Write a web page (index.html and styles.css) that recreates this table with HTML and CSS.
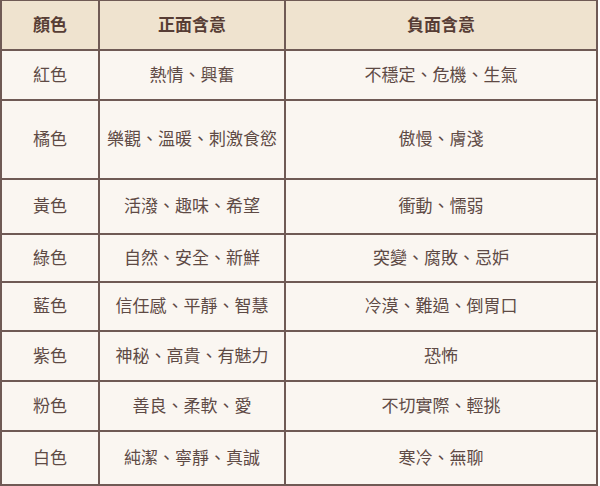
FILE: index.html
```html
<!DOCTYPE html>
<html lang="zh-Hant">
<head>
<meta charset="utf-8">
<link rel="stylesheet" href="styles.css">
</head>
<body>
<table class="meaning">
  <colgroup>
    <col class="c1"><col class="c2"><col class="c3">
  </colgroup>
  <thead>
    <tr class="h-head"><th>顏色</th><th>正面含意</th><th>負面含意</th></tr>
  </thead>
  <tbody>
    <tr class="h50"><td>紅色</td><td>熱情、興奮</td><td>不穩定、危機、生氣</td></tr>
    <tr class="h79"><td>橘色</td><td>樂觀、溫暖、刺激食慾</td><td>傲慢、膚淺</td></tr>
    <tr class="h55"><td>黃色</td><td>活潑、趣味、希望</td><td>衝動、懦弱</td></tr>
    <tr class="h48"><td>綠色</td><td>自然、安全、新鮮</td><td>突變、腐敗、忌妒</td></tr>
    <tr class="h49"><td>藍色</td><td>信任感、平靜、智慧</td><td>冷漠、難過、倒胃口</td></tr>
    <tr class="h50"><td>紫色</td><td>神秘、高貴、有魅力</td><td>恐怖</td></tr>
    <tr class="h50"><td>粉色</td><td>善良、柔軟、愛</td><td>不切實際、輕挑</td></tr>
    <tr class="h54"><td>白色</td><td>純潔、寧靜、真誠</td><td>寒冷、無聊</td></tr>
  </tbody>
</table>
</body>
</html>
```

FILE: styles.css
```css
html, body {
  margin: 0;
  padding: 0;
  background: #ffffff;
}

.meaning {
  width: 598px;
  table-layout: fixed;
  border-collapse: collapse;
  margin-top: -1px;
  font-family: "Noto Sans CJK SC", "Noto Sans CJK TC", sans-serif;
  font-size: 17px;
  line-height: 1.2;
  color: #5e4a45;
}

.c1 { width: 98px; }
.c2 { width: 186px; }
.c3 { width: 312px; }

.meaning th,
.meaning td {
  border: 2px solid #6f5a55;
  text-align: center;
  vertical-align: middle;
  padding: 0 0 2px 0;
}

.meaning th {
  background: #efe3cf;
  color: #573d35;
  font-weight: 700;
}

.meaning td {
  background: #faf6f1;
}

.h-head { height: 50px; }
.h48 { height: 48px; }
.h49 { height: 49px; }
.h50 { height: 50px; }
.h54 { height: 54px; }
.h55 { height: 55px; }
.h79 { height: 79px; }
```
